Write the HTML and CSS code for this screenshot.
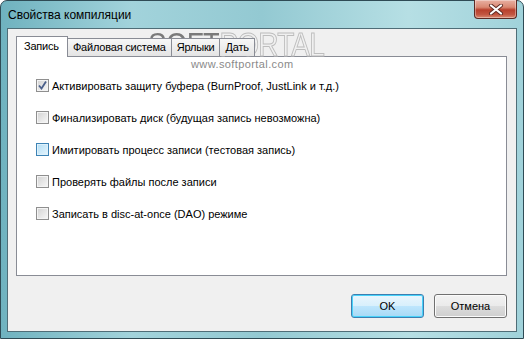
FILE: index.html
```html
<!DOCTYPE html>
<html lang="ru">
  <head>
    <meta charset="UTF-8" />
    <title>Свойства компиляции</title>
    <link rel="stylesheet" href="styles.css">
  </head>
  <body>
    <div class="window">
      <div class="titlebar">
        <span class="title">Свойства компиляции</span>
        <div class="close-btn">
          <svg width="16" height="11" viewBox="0 0 16 11">
            <path d="M3 1.5 L13 9.5 M13 1.5 L3 9.5" stroke="#5e2a22" stroke-width="4" stroke-linecap="round" fill="none" />
            <path d="M3 1.5 L13 9.5 M13 1.5 L3 9.5" stroke="#ffffff" stroke-width="2.2" stroke-linecap="round" fill="none" />
          </svg>
        </div>
      </div>

      <div class="client">
        <div class="tabs">
          <div class="tab active">Запись</div>
          <div class="tab">Файловая система</div>
          <div class="tab">Ярлыки</div>
          <div class="tab">Дать</div>
        </div>

        <div class="panel">
          <label class="option">
            <span class="check checked">
              <svg width="9" height="9" viewBox="0 0 9 9">
                <path d="M1 4.5 L3.5 7.5 L8 0.5" stroke="#4a5f8a" stroke-width="1.8" fill="none" />
              </svg>
            </span>
            Активировать защиту буфера (BurnProof, JustLink и т.д.)
          </label>
          <label class="option">
            <span class="check"></span>
            Финализировать диск (будущая запись невозможна)
          </label>
          <label class="option">
            <span class="check hover"></span>
            Имитировать процесс записи (тестовая запись)
          </label>
          <label class="option">
            <span class="check"></span>
            Проверять файлы после записи
          </label>
          <label class="option">
            <span class="check"></span>
            Записать в disc-at-once (DAO) режиме
          </label>
        </div>

        <div class="buttons">
          <button class="btn default">OK</button>
          <button class="btn">Отмена</button>
        </div>
      </div>

      <!-- watermark from the original screenshot -->
      <div class="watermark">
        <div class="wm-big"><span class="wm-dots">SOFT</span>PORTAL</div>
        <div class="wm-url">www.softportal.com</div>
      </div>
    </div>
  </body>
</html>
```

FILE: styles.css
```css
* {
  box-sizing: border-box;
}

body {
  margin: 0;
  font-family: "Liberation Sans", Arial, sans-serif;
  font-size: 11px;
  color: #000;
  background-color: #fff;
  overflow: hidden;
}

.window {
  position: relative;
  width: 524px;
  height: 339px;
  border: 1px solid #2f4b55;
  border-radius: 7px 7px 0 0;
  background: linear-gradient(90deg, #6fb2bf 0%, #a2d3db 25%, #93c9d2 50%, #b6dfe4 78%, #a0d2da 100%);
  display: flex;
  flex-direction: column;
}

.titlebar {
  position: relative;
  height: 27px;
  flex: none;
}

.title {
  position: absolute;
  left: 7px;
  top: 7px;
  font-size: 12px;
  color: #000;
}

.close-btn {
  position: absolute;
  right: 6px;
  top: -1px;
  width: 43px;
  height: 19px;
  border: 1px solid #5b2a24;
  border-top: none;
  border-radius: 0 0 4px 4px;
  background: linear-gradient(#e8b0a2 0%, #d98872 40%, #b8402c 55%, #c25540 80%, #d98a70 100%);
  box-shadow: inset 0 0 0 1px rgba(255, 255, 255, 0.35);
  display: flex;
  align-items: center;
  justify-content: center;
}

.client {
  margin: 0 6px 6px 6px;
  flex: 1;
  border: 1px solid #4f6d77;
  background-color: #f0f0f0;
  padding: 7px 9px 0 8px;
  display: flex;
  flex-direction: column;
}

.tabs {
  display: flex;
  align-items: flex-end;
  margin-bottom: -1px;
  position: relative;
  z-index: 1;
  letter-spacing: -0.2px;
}

.tab {
  height: 18px;
  line-height: 16px;
  padding: 0 5px;
  margin-bottom: 1px;
  margin-left: -1px;
  border: 1px solid #898c95;
  border-bottom: none;
  background: linear-gradient(#f7f7f7, #e4e4e4);
  white-space: nowrap;
}

.tab.active {
  height: 21px;
  line-height: 19px;
  padding: 0 8px 0 7px;
  margin-left: 0;
  margin-bottom: 0;
  background: #fff;
  position: relative;
  z-index: 2;
}

.panel {
  height: 220px;
  border: 1px solid #898c95;
  background-color: #fff;
  padding: 22px 19px 0 19px;
  display: flex;
  flex-direction: column;
  gap: 19px;
}

.option {
  display: flex;
  align-items: center;
  gap: 3px;
  height: 13px;
  white-space: nowrap;
}

.check {
  width: 13px;
  height: 13px;
  border: 1px solid #8f8f8f;
  background: linear-gradient(135deg, #d2d2d2, #f8f8f8);
  box-shadow: inset 0 0 0 1px #f4f4f4;
  display: flex;
  align-items: center;
  justify-content: center;
  flex: none;
}

.check.hover {
  border-color: #3d83b5;
  background: linear-gradient(135deg, #b3def5, #e6f5fd);
  box-shadow: inset 0 0 0 1px #def1fb;
}

.buttons {
  display: flex;
  justify-content: flex-end;
  gap: 10px;
  margin-top: 18px;
}

.btn {
  width: 73px;
  height: 24px;
  padding: 0;
  font-family: inherit;
  font-size: 11px;
  color: #000;
  border: 1px solid #707070;
  border-radius: 3px;
  background: linear-gradient(#f2f2f2 0%, #ebebeb 48%, #dddddd 50%, #cfcfcf 100%);
  box-shadow: inset 0 0 0 1px #fbfbfb;
}

.btn.default {
  border-color: #3c7fb1;
  background: linear-gradient(#eaf6fd 0%, #d9f0fc 48%, #bee6fd 50%, #a7d9f5 100%);
  box-shadow: inset 0 0 0 1px #48d2fa;
}

.watermark {
  position: absolute;
  left: 147px;
  top: 27px;
  width: 200px;
  height: 45px;
  pointer-events: none;
}

.wm-big {
  font-size: 33px;
  line-height: 33px;
  letter-spacing: -1px;
  white-space: nowrap;
  transform: scaleX(0.85);
  transform-origin: left top;
  color: transparent;
  -webkit-text-stroke: 1px #bdbdbd;
}

.wm-dots {
  -webkit-text-stroke: 0;
  background: radial-gradient(circle, #7a7a7a 0.75px, transparent 1.05px) 0 0 / 2px 2px;
  -webkit-background-clip: text;
  background-clip: text;
}

.wm-url {
  position: absolute;
  left: 43px;
  top: 30px;
  font-size: 11px;
  letter-spacing: 0.4px;
  color: #8a8a8a;
  white-space: nowrap;
}
```
